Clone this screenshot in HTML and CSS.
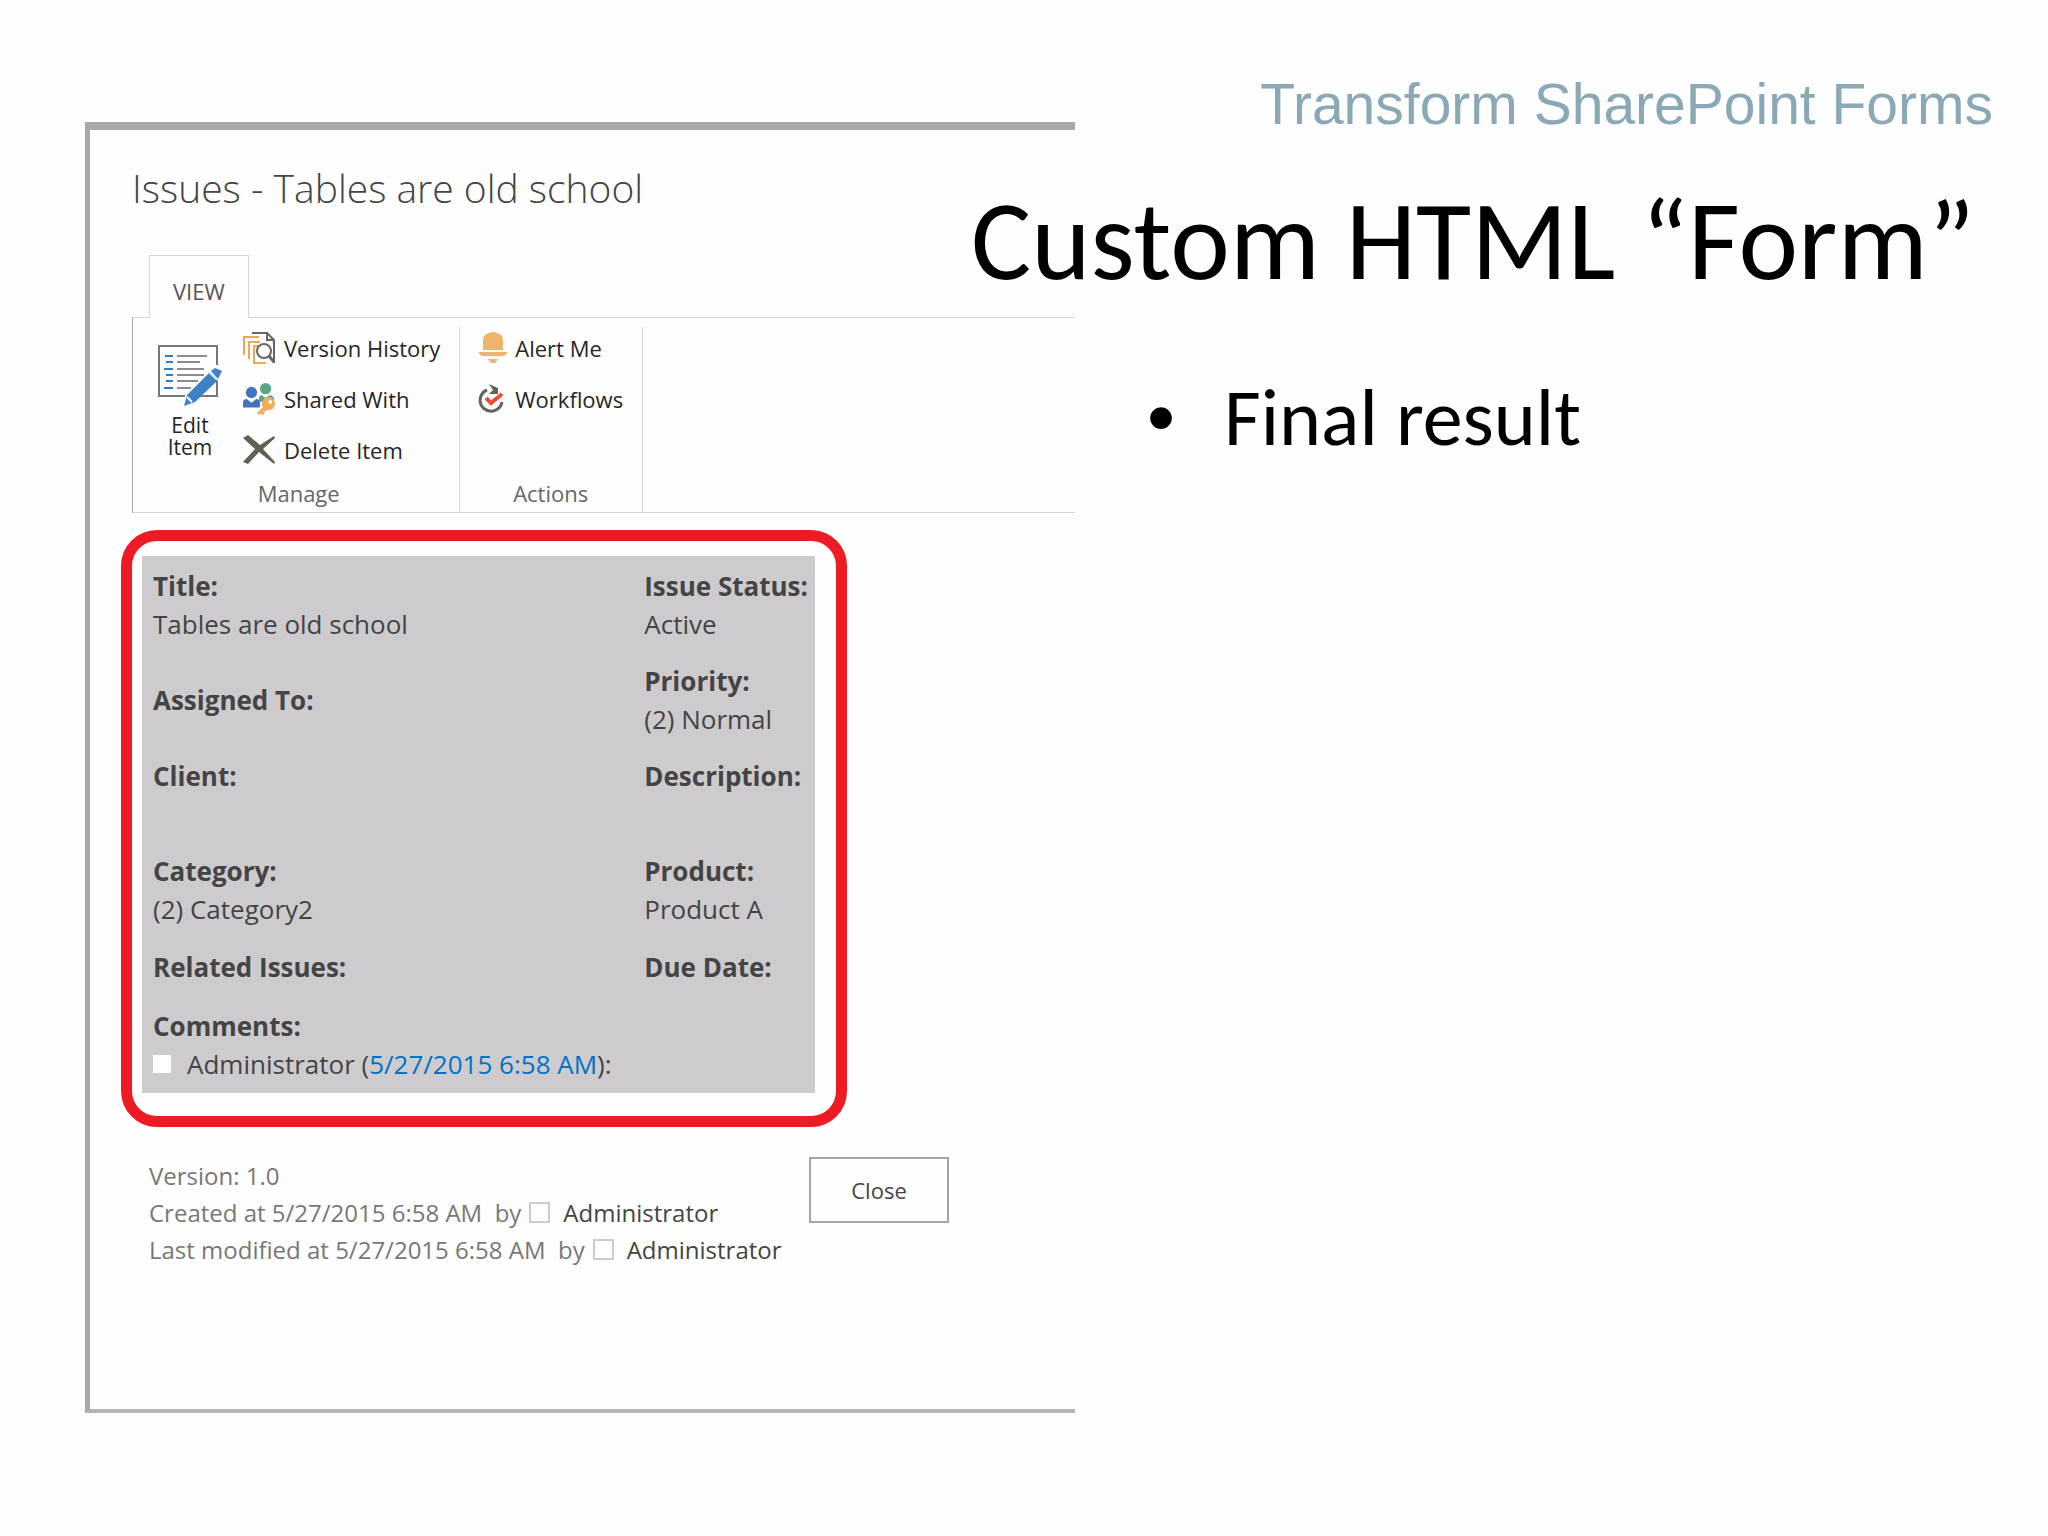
FILE: index.html
```
<!DOCTYPE html>
<html lang="en">
<head>
    <meta charset="UTF-8">
    <meta name="viewport" content="width=device-width, initial-scale=1.0">
    <title>Transform SharePoint Forms</title>
    <link rel="stylesheet" href="styles.css">
</head>
<body>

    <main class="slide">

        <!-- SharePoint dialog -->
        <section class="dialog">
            <h2 class="dialog-title">Issues - Tables are old school</h2>

            <div class="ribbon">
                <button type="button" class="tab">VIEW</button>
                <div class="ribbon-body">
                    <div class="group">
                        <div class="group-items">
                            <button type="button" class="big-btn">
                                <svg width="66" height="64" viewBox="0 0 66 64">
                                    <path d="M60 21V2H2v50h26M42 52h18V36" fill="none" stroke="#777" stroke-width="2"/>
                                    <path d="M8 12h8M9 18h7M7 25h9M9 31h7M9 37h7M7 44h9" stroke="#2f7cc0" stroke-width="2"/>
                                    <path d="M20 12h30M20 18h23M20 25h27M20 31h27M20 37h21M20 44h14" stroke="#8c8c8c" stroke-width="2"/>
                                    <path d="M27 62l3-11 22-22 8 8-22 21z" fill="#3c82c4"/>
                                    <path d="M30 53l5 5" stroke="#fff" stroke-width="2"/>
                                    <path d="M54 27l4-3 7 3-4 8z" fill="#3c82c4"/>
                                    <path d="M52 28l9 8" stroke="#cfe2f3" stroke-width="2"/>
                                </svg>
                                <span>Edit<br>Item</span>
                            </button>
                            <div class="small-btns">
                                <button type="button" class="small-btn">
                                    <svg width="32" height="32" viewBox="0 0 32 32">
                                        <path d="M9 1h15l7 7v23M24 1v7h7" fill="none" stroke="#666" stroke-width="2"/>
                                        <path d="M1 23V5h15M6 27V10h11M23 31H11V14h5" fill="none" stroke="#eda854" stroke-width="2"/>
                                        <circle cx="21" cy="19" r="7" fill="#fff" stroke="#666" stroke-width="2"/>
                                        <path d="M26 24l5 6" stroke="#666" stroke-width="3"/>
                                    </svg>
                                    Version History
                                </button>
                                <button type="button" class="small-btn">
                                    <svg width="32" height="34" viewBox="0 0 34 34">
                                        <circle cx="24" cy="6" r="6" fill="#5ba587"/>
                                        <path d="M17 20v-4q0-3 3-3l4 3 4-3q5 0 5 5v2z" fill="#5ba587"/>
                                        <circle cx="9" cy="10" r="6" fill="#4272c0"/>
                                        <path d="M0 26v-5q0-4 4-4l5 4 5-4q4 0 4 4v5z" fill="#4272c0"/>
                                        <path d="M25 24l-9 9" stroke="#fff" stroke-width="7"/>
                                        <circle cx="27" cy="22" r="7" fill="#efac5f"/>
                                        <circle cx="29" cy="20" r="2" fill="#fff"/>
                                        <path d="M24 25l-8 8M18 30l4 3M21 27l3 3" stroke="#efac5f" stroke-width="3"/>
                                    </svg>
                                    Shared With
                                </button>
                                <button type="button" class="small-btn">
                                    <svg width="32" height="30" viewBox="0 0 32 30">
                                        <path d="M0 3l5-3 12 10L31 1l1 2-12 11 12 13-1 2-15-12L5 29l-5-2 12-13z" fill="#625f54"/>
                                    </svg>
                                    Delete Item
                                </button>
                            </div>
                        </div>
                        <div class="caption">Manage</div>
                    </div>
                    <div class="group group-actions">
                        <div class="small-btns">
                            <button type="button" class="small-btn">
                                <svg width="30" height="32" viewBox="0 0 30 32">
                                    <path d="M5 18V9q0-7 6-8q4-2 8 0q6 1 6 8v9z" fill="#eeb36d"/>
                                    <path d="M1 20h28q0 4-5 4H6q-5 0-5-4z" fill="#eeb36d"/>
                                    <path d="M10 27h10l-3 4h-4z" fill="#eeb36d"/>
                                </svg>
                                Alert Me
                            </button>
                            <button type="button" class="small-btn">
                                <svg width="30" height="32" viewBox="0 0 30 32">
                                    <path d="M9 7a11 11 0 1 0 15 12" fill="none" stroke="#62635a" stroke-width="3"/>
                                    <path d="M11 1l9 4v6h-9l4-4z" fill="#62635a"/>
                                    <path d="M8 15l5 5L24 11" fill="none" stroke="#e8503a" stroke-width="4"/>
                                </svg>
                                Workflows
                            </button>
                        </div>
                        <div class="caption">Actions</div>
                    </div>
                </div>
            </div>

            <!-- Highlighted custom form -->
            <div class="highlight">
                <table class="form-table">
                    <tr>
                        <td class="first"><b>Title:</b><br>Tables are old school</td>
                        <td><b>Issue Status:</b><br>Active</td>
                    </tr>
                    <tr>
                        <td class="middle"><b>Assigned To:</b></td>
                        <td><b>Priority:</b><br>(2) Normal</td>
                    </tr>
                    <tr>
                        <td><b>Client:</b></td>
                        <td><b>Description:</b><br>&nbsp;</td>
                    </tr>
                    <tr>
                        <td><b>Category:</b><br>(2) Category2</td>
                        <td><b>Product:</b><br>Product A</td>
                    </tr>
                    <tr class="compact">
                        <td><b>Related Issues:</b></td>
                        <td><b>Due Date:</b></td>
                    </tr>
                    <tr class="last">
                        <td colspan="2">
                            <b>Comments:</b>
                            <div class="comment">
                                <input type="checkbox" id="c1" class="presence">
                                <label for="c1">Administrator</label>&nbsp;(<a href="#">5/27/2015 6:58 AM</a>):
                            </div>
                        </td>
                    </tr>
                </table>
            </div>

            <div class="dialog-footer">
                <div class="info">
                    <div>Version: 1.0</div>
                    <div class="info-row">
                        <span>Created at 5/27/2015 6:58 AM &nbsp;by</span>
                        <input type="checkbox" id="c2" class="presence">
                        <label for="c2">Administrator</label>
                    </div>
                    <div class="info-row">
                        <span>Last modified at 5/27/2015 6:58 AM &nbsp;by</span>
                        <input type="checkbox" id="c3" class="presence">
                        <label for="c3">Administrator</label>
                    </div>
                </div>
                <button type="button" class="close-btn">Close</button>
            </div>
        </section>

        <!-- Slide text, runs over the right side of the dialog -->
        <section class="slide-text">
            <p class="deck-name">Transform SharePoint Forms</p>
            <h1>Custom HTML “Form”</h1>
            <ul>
                <li>Final result</li>
            </ul>
        </section>

    </main>

</body>
</html>
```
FILE: styles.css
```
* {
    box-sizing: border-box;
}
body {
    margin: 0;
    background-color: #fefefe;
    font-family: "Open Sans", "Noto Sans", sans-serif;
    color: #444;
}
button {
    font-family: inherit;
    font-size: 22px;
    color: #262626;
    background: none;
    border: none;
    padding: 0;
    cursor: pointer;
}
svg {
    display: block;
    flex-shrink: 0;
}

/* the dialog and the text share one row and overlap */
.slide {
    display: grid;
    grid-template-columns: 85fr 990fr 973fr;
    align-items: start;
}
.dialog {
    grid-column: 2;
    grid-row: 1;
    margin-top: 122px;
    padding: 32px 0 141px;
    border-top: 8px solid #a9a9a9;
    border-left: 5px solid #a9a9a9;
    border-bottom: 4px solid #b4b4b4;
}
.slide-text {
    grid-column: 2 / 4;
    grid-row: 1;
    justify-self: end;
    padding: 72px 55px 0 0;
    color: #000;
    font-family: Carlito, Calibri, Lato, sans-serif;
}
.dialog-title {
    margin: 0 0 41px 42px;
    font-size: 39px;
    font-weight: 300;
    line-height: 52px;
}

/* Ribbon */
.ribbon {
    margin-left: 42px;
}
.tab {
    display: block;
    position: relative;
    margin: 0 0 -1px 17px;
    padding: 20px 23px 12px;
    line-height: 30px;
    color: #555;
    background-color: #fefefe;
    border: 1px solid #d4d4d4;
    border-bottom: none;
}
.ribbon-body {
    display: flex;
    padding-top: 9px;
    border: 1px solid #d4d4d4;
    border-left-color: #aaa;
    border-right: none;
}
.group {
    padding: 1px 19px 4px 24px;
    border-right: 1px solid #d9d9dd;
}
.group-actions {
    padding-left: 18px;
}
.group-actions .small-btns {
    min-height: 142px;
}
.group-actions .small-btn {
    gap: 7px;
}
.group-items {
    display: flex;
    gap: 20px;
}
.big-btn {
    display: flex;
    flex-direction: column;
    align-items: center;
    gap: 6px;
    padding-top: 16px;
    font-size: 21px;
    line-height: 22px;
}
.small-btns {
    display: flex;
    flex-direction: column;
    gap: 11px;
}
.small-btn {
    display: flex;
    align-items: center;
    gap: 9px;
    height: 40px;
    white-space: nowrap;
}
.caption {
    margin-top: 8px;
    font-size: 22px;
    line-height: 30px;
    text-align: center;
    color: #666;
}

/* Custom form */
.highlight {
    width: 73.7%;
    margin: 17px 0 0 31px;
    padding: 15px 21px 23px 10px;
    border: 11px solid #ed1c24;
    border-radius: 36px;
}
.form-table {
    width: 100%;
    border-collapse: collapse;
    background-color: #cdcbcd;
    font-size: 26px;
    line-height: 38px;
}
.form-table td {
    padding: 11px 0 8px 11px;
    vertical-align: top;
    white-space: nowrap;
}
.form-table .first {
    width: 73%;
}
.form-table .middle {
    vertical-align: middle;
}
.form-table .compact td {
    padding-top: 12px;
    padding-bottom: 10px;
}
.form-table .last td {
    padding-bottom: 10px;
}
.comment {
    display: flex;
    align-items: center;
}
.comment a {
    color: #0072c6;
    text-decoration: none;
}
.presence {
    appearance: none;
    width: 21px;
    height: 21px;
    margin: 0 13px 0 8px;
    border: 2px solid #ccc;
    background-color: #fff;
}
.comment .presence {
    width: 18px;
    height: 18px;
    margin: 0 16px 0 0;
    border: none;
}

/* Footer */
.dialog-footer {
    display: flex;
    justify-content: space-between;
    align-items: flex-start;
    margin: 30px 126px 0 59px;
}
.info {
    font-size: 24px;
    line-height: 37px;
    color: #777;
}
.info-row {
    display: flex;
    align-items: center;
}
.info label {
    color: #444;
}
.close-btn {
    width: 140px;
    height: 66px;
    color: #444;
    background-color: #fdfcfe;
    border: 2px solid #a5a5a8;
}

/* Slide text */
.deck-name {
    margin: 0;
    font-family: "Liberation Sans", Arial, sans-serif;
    font-size: 57px;
    line-height: 64px;
    text-align: right;
    color: #8aa8b5;
}
h1 {
    margin: 44px 18px 0 0;
    font-size: 113px;
    font-weight: 400;
    line-height: 120px;
    text-align: right;
}
ul {
    margin: 74px 0 0;
    padding: 0 0 0 176px;
    list-style: none;
    font-size: 80px;
    line-height: 88px;
}
li {
    display: flex;
    gap: 49px;
}
li::before {
    content: "•";
    font-family: "Liberation Sans", Arial, sans-serif;
}
```
